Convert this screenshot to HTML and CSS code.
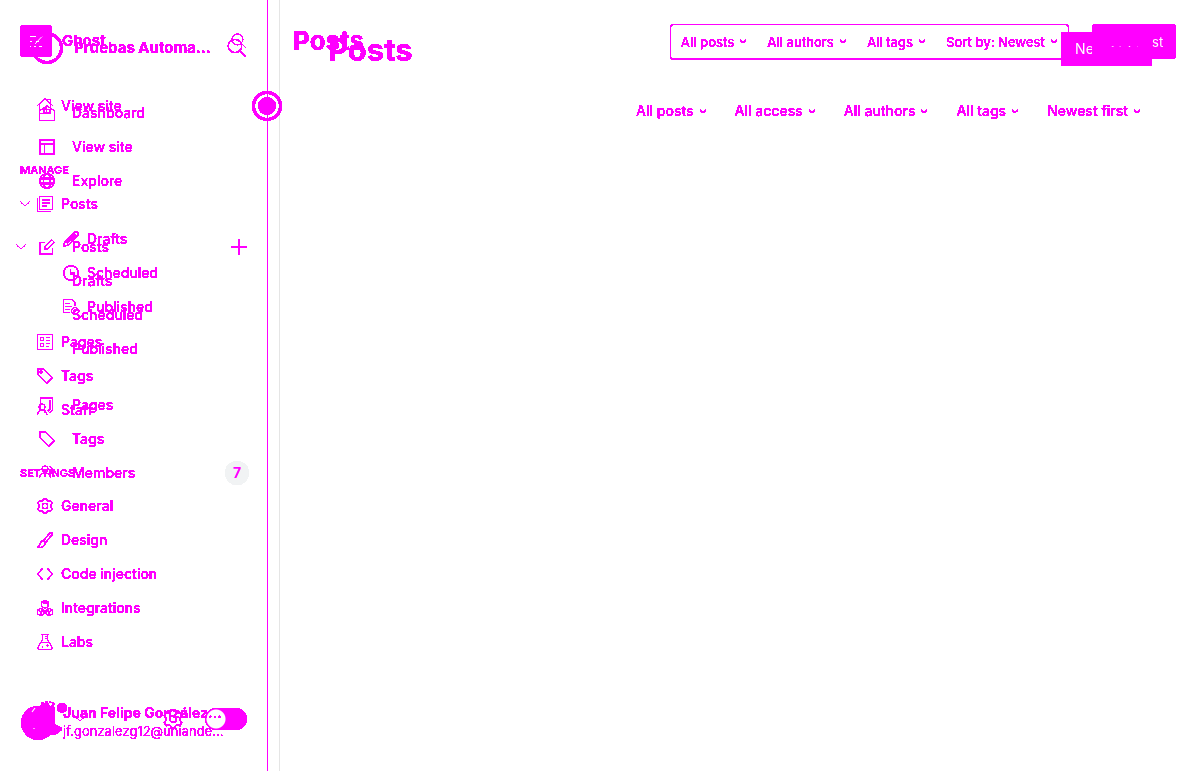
FILE: index.html
```
<!DOCTYPE html>
<html lang="en">
<head>
<meta charset="utf-8">
<title>Posts</title>
<link rel="stylesheet" href="styles.css">
</head>
<body>
<svg class="defs" width="0" height="0" aria-hidden="true">
  <filter id="hard" x="0" y="0" width="100%" height="100%" color-interpolation-filters="sRGB">
    <feComponentTransfer><feFuncA type="discrete" tableValues="0 0 1 1 1 1 1 1 1 1"/></feComponentTransfer>
  </filter>
  <symbol id="chev" viewBox="0 0 10 6"><path d="M0.5 0.8L5 5L9.5 0.8"/></symbol>
  <symbol id="small-chev" viewBox="0 0 8 5"><path d="M1 1L4 3.800L7 1"/></symbol>
  <symbol id="search" viewBox="0 0 20 20"><circle cx="8" cy="8" r="6.7"/><path d="M13 13L18.5 18.5"/></symbol>
  <symbol id="gear" viewBox="0 0 18 18"><circle cx="9" cy="9" r="3"/><path d="M7.300 1h3.400l.6 2 1.600.8 2-.9 2 2.700-1.300 1.600v3.600l1.300 1.600-2 2.700-2-.9-1.600.8-.6 2H7.300l-.6-2-1.600-.8-2 .9-2-2.700 1.300-1.600V7.200L1.100 5.600l2-2.700 2 .9L6.700 3z"/></symbol>
</svg>

<div class="stage">
  <div class="layer first">
    <aside class="side">
      <header class="brand">
        <svg class="logo" viewBox="0 0 32 32" aria-hidden="true"><rect width="32" height="32" rx="4" fill="#f0f" stroke="none"/><path d="M10 11.500h7M10 16.500h4M10 21.500h6M19 21.500h3M16 16.500h3M22 11.500L14 20" stroke="#fff" stroke-width="1"/></svg>
        <strong>Ghost</strong>
        <button class="icon-button" aria-label="Search"><svg class="i16"><use href="#search"/></svg></button>
      </header>
      <nav>
        <ul class="list">
          <li><a href="#"><svg viewBox="0 0 16 16"><path d="M0 8L8 0.7L16 8M2.500 7v8.500h11V7M6.500 15v-5h3v5M10.500 1.500h3v4"/></svg>View site</a></li>
        </ul>
        <h2 class="manage">Manage</h2>
        <ul class="list">
          <li><button class="fold" aria-label="Toggle posts"><svg><use href="#chev"/></svg></button><a href="#"><svg viewBox="0 0 16 16"><path d="M2.500.5h13v13h-13zM.5 2.500v13h13"/><path d="M5 4h8M5 7h8M5 10h5" stroke-width="1.500"/></svg>Posts</a>
            <ul class="sub">
              <li><a href="#"><svg viewBox="0 0 16 16" class="bold"><path d="M.7 15.300l1-4.300L12 1c2-1 4 1 3 3L5.500 14zM4 12L12.500 3.500"/></svg>Drafts</a></li>
              <li><a href="#"><svg viewBox="0 0 16 16" class="bold"><circle cx="8" cy="8" r="7.300"/><path d="M7.500 4v4.500H12"/></svg>Scheduled</a></li>
              <li><a href="#"><svg viewBox="0 0 16 16"><path d="M7 13.500H.5v-13h8.500l3 3v3M2 4.500h5M2 7.500h7M2 10.500h5"/><circle cx="12" cy="12" r="3.500"/><path d="M10.500 12l1.500 1 2-2"/></svg>Published</a></li>
            </ul>
          </li>
          <li><a href="#"><svg viewBox="0 0 16 16"><path d="M.5.5h15v15H.5zM3.500 3.500h3v3h-3zM3.500 9.500h3v3h-3zM9 3.500h4M9 6.500h4M9 9.500h4M9 12.500h3"/></svg>Pages</a></li>
          <li><a href="#"><svg viewBox="0 0 16 16" class="bold"><path d="M.8.800h5.700l9 9-5.700 5.700-9-9z"/><circle cx="4" cy="4" r="1"/></svg>Tags</a></li>
          <li><a href="#"><svg viewBox="0 0 16 16"><circle cx="5" cy="5" r="3"/><path d="M.5 13c0-3 2-5 4.500-5 2.500 0 5 2 5 5"/></svg>Staff</a></li>
        </ul>
        <h2 class="settings">Settings</h2>
        <ul class="list">
          <li><a href="#"><svg class="bold"><use href="#gear"/></svg>General</a></li>
          <li><a href="#"><svg viewBox="0 0 16 16" class="bold"><path d="M6.500 8.500l6.500-7.500c2-1 3 0 2 2L8.500 10.500zM6.500 8.500C2.500 9 4 13 .5 15.500 5 16 8 14 8.500 10.500"/></svg>Design</a></li>
          <li><a href="#"><svg viewBox="0 0 16 16" class="bold"><path d="M5.500 2.500L.8 8l4.700 5.500M10.500 2.500L15.200 8l-4.700 5.500"/></svg>Code injection</a></li>
          <li><a href="#"><svg viewBox="0 0 16 16"><path d="M8 .5l3.300 1.500v4.500L8 8 4.700 6.500V2zM4.700 2L8 3.500 11.300 2M3.800 8.500L7.100 10v4l-3.300 1.500L.5 14v-4zM.5 10l3.300 1.500L7.100 10M3.800 11.500v4M12.200 8.500l3.300 1.500v4l-3.300 1.500L8.900 14v-4zM8.900 10l3.300 1.500 3.300-1.500M12.200 11.500v4"/></svg>Integrations</a></li>
          <li><a href="#"><svg viewBox="0 0 16 16"><path d="M4 .5h8M5.500.5v5L.7 14c0 1 .5 1.500 1.500 1.500h11.600c1 0 1.500-.5 1.500-1.500L10.500 5.500v-5M3 8.500h10M8 2.500h2M8 4.500h2M5.500 12v2M9 11.500h3M10.500 10v3"/></svg>Labs</a></li>
        </ul>
      </nav>
      <footer class="account">
        <svg class="avatar" viewBox="0 0 36 36" aria-hidden="true"><circle cx="18" cy="19" r="17" fill="#f0f" stroke="none"/><path d="M12 8L15 4M24 2l2 6M14 24v1M18 24v1" stroke="#fff"/></svg>
        <div class="who"><strong>Juan Felipe González…</strong><span>jf.gonzalezg12@uniande…</span></div>
      </footer>
      <button class="handle" aria-label="Move divider"><span></span></button>
    </aside>
    <main class="main">
      <header class="top">
        <h1>Posts</h1>
        <div class="filters">
          <button>All posts<svg><use href="#small-chev"/></svg></button>
          <button>All authors<svg><use href="#small-chev"/></svg></button>
          <button>All tags<svg><use href="#small-chev"/></svg></button>
          <button>Sort by: Newest<svg><use href="#small-chev"/></svg></button>
        </div>
        <button class="new">New post</button>
      </header>
    </main>
  </div>

  <div class="layer second">
    <aside class="side">
      <header class="brand">
        <svg class="logo" viewBox="0 0 32 32" aria-hidden="true"><circle cx="16" cy="16" r="14.500" stroke-width="3"/></svg>
        <strong>Pruebas Automa…</strong>
        <button class="icon-button" aria-label="Search"><svg class="i20"><use href="#search"/></svg></button>
      </header>
      <nav>
        <ul class="list">
          <li><a href="#"><svg viewBox="0 0 16 16"><path d="M.5 6L8 .7 15.500 6v9.500H.5zM5.500 8V4.500h5V8h-5"/></svg>Dashboard</a></li>
          <li><a href="#"><svg viewBox="0 0 16 16" class="bold"><path d="M1 1h14v14H1zM1 5h14M5.500 5v10"/></svg>View site</a></li>
          <li><a href="#"><svg viewBox="0 0 16 16" class="bold"><circle cx="8" cy="8" r="7.300"/><ellipse cx="8" cy="8" rx="3.500" ry="7.300"/><path d="M1 5.500h14M1 10.500h14"/></svg>Explore</a></li>
        </ul>
        <ul class="list group">
          <li><button class="fold" aria-label="Toggle posts"><svg><use href="#chev"/></svg></button><a href="#"><svg viewBox="0 0 16 16"><path d="M6 3.500H.8v11.700h12.700V9M5.500 10.500l.5-3L13 .8l2.200 2.200L8.500 10z"/></svg>Posts</a><button class="add" aria-label="New post"><svg viewBox="0 0 16 16"><path d="M8 0v16M0 8h16" stroke-width="1.500"/></svg></button>
            <ul class="sub"><li><a href="#">Drafts</a></li><li><a href="#">Scheduled</a></li><li><a href="#">Published</a></li></ul>
          </li>
        </ul>
        <ul class="list rest">
          <li><a href="#"><svg viewBox="0 0 16 16" class="bold"><path d="M1.500 1h12v12l-4 4H7l-1.500-4h-4zM11 3v9l-2 2"/></svg>Pages</a></li>
          <li><a href="#"><svg viewBox="0 0 16 16" class="bold"><path d="M.8.800h5.700l9 9-5.700 5.700-9-9z"/></svg>Tags</a></li>
          <li><a href="#"><svg viewBox="0 0 16 16"><circle cx="6" cy="4" r="3"/><path d="M.5 13c0-3 2-5 5.500-5s5.500 2 5.500 5M10 1.500c4 0 4 5 1 5.500 2 1 4 2 4.500 5"/></svg>Members</a><span class="badge">7</span></li>
        </ul>
      </nav>
      <footer class="tools">
        <svg class="face" viewBox="0 0 36 36" aria-hidden="true"><path d="M2 15C6 5 12 1 17 2l2 4 3-4 2 6v15l7 4v2l-7 5H8z" fill="#f0f" stroke="none"/><path d="M10 2.500Q17-1 24 3" stroke-dasharray="3 1"/><circle cx="31" cy="7" r="5" fill="#f0f" stroke="none"/></svg>
        <svg class="caret"><use href="#chev"/></svg>
        <button class="icon-button" aria-label="Settings"><svg class="i20"><use href="#gear"/></svg></button>
        <input class="toggle" type="checkbox" aria-label="Dark mode">
      </footer>
    </aside>
    <main class="main">
      <header class="top"><h1>Posts</h1><button class="new">New post</button></header>
      <div class="filters">
        <button>All posts<svg><use href="#small-chev"/></svg></button>
        <button>All access<svg><use href="#small-chev"/></svg></button>
        <button>All authors<svg><use href="#small-chev"/></svg></button>
        <button>All tags<svg><use href="#small-chev"/></svg></button>
        <button>Newest first<svg><use href="#small-chev"/></svg></button>
      </div>
    </main>
  </div>
</div>
</body>
</html>
```
FILE: styles.css
```
* { box-sizing: border-box; }
body { margin: 0; background: #fff; color: #f0f; font: 500 14px/20px Inter, sans-serif; }
button { padding: 0; border: 0; background: none; color: inherit; font: inherit; display: flex; align-items: center; }
a { color: inherit; text-decoration: none; }
h1, h2, ul { margin: 0; padding: 0; }
ul { list-style: none; }
svg { fill: none; stroke: #f0f; stroke-width: 1.2; flex: none; }
.defs { position: absolute; }
.stage { display: grid; min-height: 100vh; isolation: isolate; background: #fff; }
.layer { grid-area: 1 / 1; display: flex; filter: url(#hard); }
.side { display: flex; flex-direction: column; flex: none; position: relative; }
.main { flex: 1; min-width: 0; }
.brand { display: flex; align-items: center; }
.brand .icon-button { margin-left: auto; }
.brand strong { font-size: 15px; font-weight: 700; }
.logo { width: 32px; height: 32px; }
.i16 { width: 16px; height: 16px; }
.i20 { width: 20px; height: 20px; }
.list li { position: relative; }
.list a { display: flex; align-items: center; height: 34px; }
.list a svg { width: 16px; height: 16px; stroke-width: 1; }
.list a .bold { stroke-width: 1.3; }
.fold { position: absolute; height: 34px; }
.fold svg, .caret { width: 10px; height: 6px; stroke-width: 1; }
h2 { font-size: 11px; line-height: 16px; font-weight: 600; text-transform: uppercase; }
.top { display: flex; align-items: flex-start; }
.top h1 { margin-right: auto; font-weight: 700; }
.filters { display: flex; align-items: center; }
.filters button { gap: 5px; white-space: nowrap; }
.filters svg { width: 8px; height: 5px; stroke-width: 1.1; }
.new { justify-content: center; height: 35px; background: #f0f; color: #fff; font-weight: 400; border-radius: 4px; }

.first .side { width: 268px; border-right: 1px solid #f0f; padding: 25px 20px 31px; }
.first .brand { height: 32px; gap: 10px; margin-bottom: 32px; }
.first .list { padding-left: 17px; }
.first .list a { gap: 8px; }
.first .sub { padding: 1px 0 1px 26px; }
.first .fold { left: -17px; }
.manage { margin: 39px 0 9px; }
.settings { margin: 38px 0 8px; }
.account { display: flex; gap: 7px; align-items: flex-start; margin-top: auto; }
.avatar { width: 36px; height: 36px; }
.who { display: grid; white-space: nowrap; }
.who strong { font-weight: 700; line-height: 18px; }
.who span { font-size: 13px; line-height: 18px; font-weight: 400; }
.handle { position: absolute; right: -15px; top: 91px; width: 30px; height: 30px; border: 3px solid #f0f; border-radius: 50%; justify-content: center; }
.handle span { width: 18px; height: 18px; border-radius: 50%; background: #f0f; flex: none; }
.first .main { padding: 24px 24px 24px 25px; }
.first .top h1 { font-size: 26px; line-height: 34px; }
.first .filters { height: 36px; padding: 0 10px; gap: 20px; border: 1px solid #f0f; border-bottom-width: 2px; border-radius: 4px; margin-right: 23px; font-size: 13px; }
.first .new { width: 84px; font-size: 13px; }

.second { mix-blend-mode: multiply; }
.second .side { width: 280px; border-right: 1px solid #e5e5e5; padding: 32px 32px 41px 31px; }
.second .brand { height: 32px; gap: 11px; margin-bottom: 32px; }
.second .list a { gap: 17px; padding-left: 8px; }
.second .sub a { padding-left: 41px; }
.second .fold { left: -15px; }
.group { margin-top: 32px; }
.rest { margin-top: 22px; }
.add { position: absolute; right: 0; top: 9px; }
.add svg { width: 16px; height: 16px; }
.badge { position: absolute; right: -2px; top: 5px; width: 24px; height: 24px; border-radius: 50%; background: #f1f3f4; text-align: center; font-weight: 700; line-height: 24px; }
.tools { display: flex; align-items: center; margin-top: auto; height: 22px; }
.face { width: 36px; height: 36px; }
.caret { margin-left: 8px; }
.tools .icon-button { margin-left: auto; margin-right: 22px; }
.toggle { appearance: none; width: 42px; height: 22px; margin: 0; border-radius: 11px; background: radial-gradient(circle at 11px 11px, #fff 9px, #f0f 10px); }
.second .main { padding: 32px 48px; }
.second .top h1 { font-size: 31px; line-height: 36px; }
.second .new { width: 91px; height: 34px; border-radius: 2px; font-size: 14px; }
.second .filters { justify-content: flex-end; gap: 28px; padding-right: 11px; margin-top: 33px; }
```
